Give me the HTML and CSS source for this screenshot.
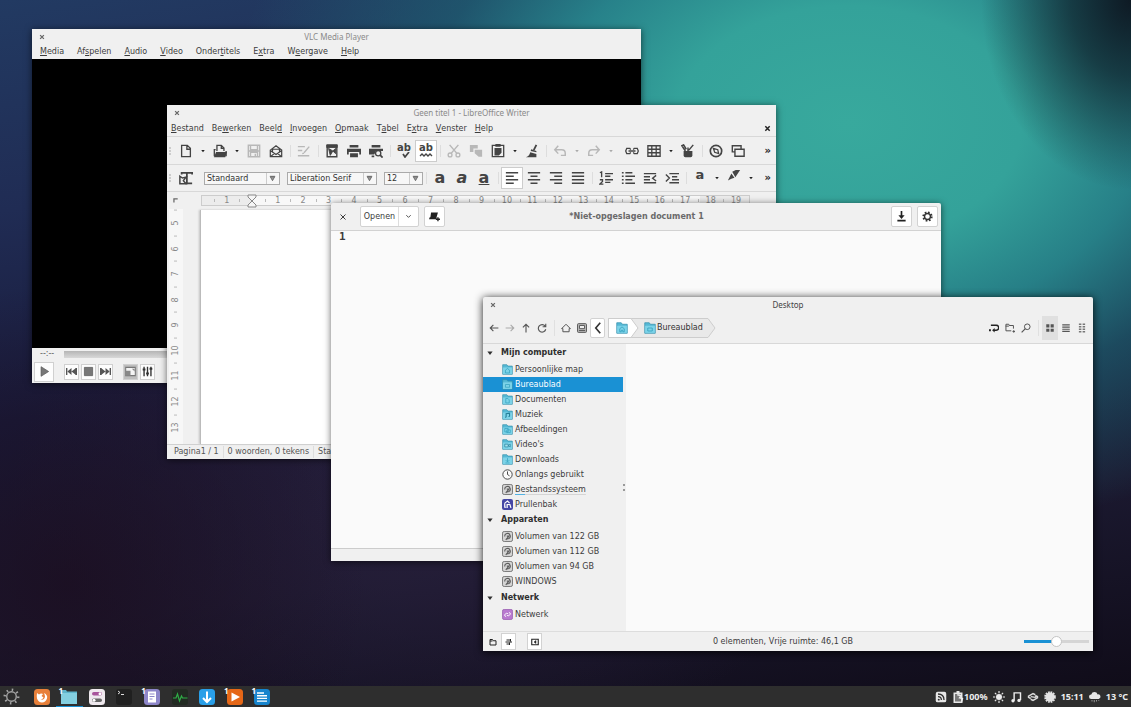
FILE: index.html
```html
<!DOCTYPE html>
<html lang="nl">
<head>
    <meta charset="UTF-8">
    <meta name="viewport" content="width=device-width, initial-scale=1.0">
    <title>Desktop</title>
    <link rel="stylesheet" href="styles.css">
</head>
<body>
    <!-- Shared icons -->
    <svg class="sprite" aria-hidden="true">
        <symbol id="i-close" viewBox="0 0 16 16"><path d="M3 3l10 10M13 3L3 13" stroke="currentColor" stroke-width="3.4"/></symbol>
        <symbol id="i-caret" viewBox="0 0 16 16"><path d="M1 4h14l-7 9z" fill="currentColor"/></symbol>
        <symbol id="i-drop" viewBox="0 0 16 16"><path d="M2 3h12M3 4h10l-5 9z" fill="#999" stroke="#666" stroke-width="2"/></symbol>
        <symbol id="i-folder" viewBox="0 0 16 16"><path d="M1 1h6l1.500 2H15v12H1z" fill="#55b9d5" stroke="#3592ad"/><path d="M1.500 5h13v9.500h-13z" fill="#7dd3e8"/></symbol>
        <symbol id="i-disk" viewBox="0 0 16 16"><rect x=".7" y=".7" width="14.600" height="14.600" rx="2.500" fill="#d4d4d4" stroke="#777" stroke-width="1.400"/><path d="M4 8a4 4 0 1 1 6 3l-3 .5M7 7.500h3L5.500 13" fill="none" stroke="#5c5c5c" stroke-width="1.600"/></symbol>
        <symbol id="i-left" viewBox="0 0 16 16"><path d="M15 8H2M7 3L2 8l5 5" fill="none" stroke="currentColor" stroke-width="1.800"/></symbol>
        <symbol id="i-right" viewBox="0 0 16 16"><path d="M1 8h13M9 3l5 5-5 5" fill="none" stroke="currentColor" stroke-width="1.800"/></symbol>
        <symbol id="i-undo" viewBox="0 0 16 16"><path d="M6 2L2 6.500 6 11M2 6.500h8q4 0 4 4V13H9" fill="none" stroke="currentColor" stroke-width="1.700"/></symbol>
        <symbol id="i-skip" viewBox="0 0 16 16"><path d="M1 3v10M15 3v10" stroke="currentColor" stroke-width="2"/><path d="M8 3v10L2 8zM14.500 3v10L8 8z" fill="currentColor"/></symbol>
    </svg>

    <main class="desktop">
        <!-- VLC -->
        <section class="window vlc">
            <header class="titlebar">
                <button class="close" aria-label="Sluiten"><svg><use href="#i-close"/></svg></button>
                <h2>VLC Media Player</h2>
            </header>
            <nav class="menubar">
                <button><u>M</u>edia</button>
                <button>Af<u>s</u>pelen</button>
                <button><u>A</u>udio</button>
                <button><u>V</u>ideo</button>
                <button>Onder<u>t</u>itels</button>
                <button>E<u>x</u>tra</button>
                <button>W<u>e</u>ergave</button>
                <button><u>H</u>elp</button>
            </nav>
            <div class="video"></div>
            <div class="seek"><span>--:--</span><div class="seek-track"></div></div>
            <div class="controls">
                <button class="play" aria-label="Afspelen"><svg viewBox="0 0 16 16"><path d="M3 1l11 7-11 7z" fill="#777" stroke="#555"/></svg></button>
                <div class="control-group">
                    <button aria-label="Vorige"><svg><use href="#i-skip"/></svg></button>
                    <button aria-label="Stoppen"><svg viewBox="0 0 16 16"><path d="M2 2h12v12H2z" fill="#777" stroke="#555"/></svg></button>
                    <button aria-label="Volgende"><svg class="flip"><use href="#i-skip"/></svg></button>
                </div>
                <div class="control-group">
                    <button class="pressed" aria-label="Volledig scherm"><svg viewBox="0 0 16 16"><path d="M1 2h14v12H1z" fill="#f4f4f4" stroke="#777" stroke-width="1.500"/><path d="M1 7h7v7H1zM10 4h4v4z" fill="#888"/></svg></button>
                    <button aria-label="Equalizer"><svg viewBox="0 0 16 16"><path d="M3 1v14M8 1v14M13 1v14" stroke="#333" stroke-width="2"/><path d="M1 5h4M6 11h4M11 4h4" stroke="#333" stroke-width="3"/></svg></button>
                </div>
            </div>
        </section>

        <!-- LibreOffice Writer -->
        <section class="window writer">
            <header class="titlebar">
                <button class="close" aria-label="Sluiten"><svg><use href="#i-close"/></svg></button>
                <h2>Geen titel 1 - LibreOffice Writer</h2>
            </header>
            <nav class="menubar">
                <button><u>B</u>estand</button>
                <button>Be<u>w</u>erken</button>
                <button>Beel<u>d</u></button>
                <button><u>I</u>nvoegen</button>
                <button><u>O</u>pmaak</button>
                <button>T<u>a</u>bel</button>
                <button>E<u>x</u>tra</button>
                <button><u>V</u>enster</button>
                <button><u>H</u>elp</button>
                <button class="close-doc" aria-label="Document sluiten"><svg><use href="#i-close"/></svg></button>
            </nav>
            <div class="toolbar standard">
                <span class="grip"></span>
                <button class="tool" aria-label="Nieuw"><svg viewBox="0 0 16 16"><path d="M3 1.500h6.500L13 5v9.500H3zM9 2v4h4" fill="none" stroke="currentColor" stroke-width="1.500"/></svg></button>
                <button class="caret" aria-label="Meer"><svg><use href="#i-caret"/></svg></button>
                <button class="tool" aria-label="Openen"><svg viewBox="0 0 16 16"><path d="M4.500 8V1.500h5l3 3V8M9.500 2v3h3M1.500 14V6.500H3M15 8v6" fill="none" stroke="currentColor" stroke-width="1.500"/><path d="M3.500 9H16l-2 6H1z" fill="currentColor"/></svg></button>
                <button class="caret" aria-label="Meer"><svg><use href="#i-caret"/></svg></button>
                <button class="tool off" aria-label="Opslaan"><svg viewBox="0 0 16 16"><path d="M1.500 1.500h13v13h-13zM4 2v4.500h8V2M4 14.500v-5h8v5M9.500 11v3M1 8h14" fill="none" stroke="currentColor" stroke-width="1.600"/></svg></button>
                <button class="tool" aria-label="E-mail"><svg viewBox="0 0 16 16"><path d="M1.500 7L8 2l6.500 5v7.500h-13zM4 9V6h8v3M1.500 7.500L8 12l6.500-4.500M1.500 14.500L6 11M14.500 14.500L10 11" fill="none" stroke="currentColor" stroke-width="1.400"/></svg></button>
                <span class="sep"></span>
                <button class="tool off" aria-label="Bewerken"><svg viewBox="0 0 16 16"><path d="M1 3h8M1 7.500h5M1 13.500h13M8 10l6-7M6 11l2-.5" fill="none" stroke="currentColor" stroke-width="1.600"/></svg></button>
                <span class="sep"></span>
                <button class="tool" aria-label="PDF"><svg viewBox="0 0 16 16"><path d="M2.500 1.500h11v13h-11z" fill="none" stroke="currentColor" stroke-width="1.600"/><path d="M2 1h12v3H2zM4 5l5 3 3-3v6L9 8l-3 5z" fill="currentColor" stroke="currentColor"/></svg></button>
                <button class="tool" aria-label="Afdrukken"><svg viewBox="0 0 16 16"><path d="M3 1h10v3H3zM0 5.500h16V12h-2V9H2v3H0zM3.500 10.500h9V15h-9z" fill="currentColor"/></svg></button>
                <button class="tool" aria-label="Afdrukvoorbeeld"><svg viewBox="0 0 16 16"><path d="M3 1h10v3H3zM0 5.500h16V8H8L6 12H0zM3 13h3v2H3z" fill="currentColor"/><circle cx="10.500" cy="10.500" r="3" fill="none" stroke="currentColor" stroke-width="1.500"/><path d="M12.500 12.500l3 3" stroke="currentColor" stroke-width="2"/></svg></button>
                <span class="sep"></span>
                <button class="tool spell" aria-label="Spelling">ab<svg viewBox="0 0 14 6"><path d="M6 2l2 3 4-5" fill="none" stroke="currentColor" stroke-width="1.700"/></svg></button>
                <button class="tool spell active" aria-label="Automatische spelling">ab<svg viewBox="0 0 14 6"><path d="M1 4l2-2 2 2 2-2 2 2 2-2 2 2" fill="none" stroke="currentColor" stroke-width="1.400"/></svg></button>
                <span class="sep"></span>
                <button class="tool off" aria-label="Knippen"><svg viewBox="0 0 16 16"><path d="M3 1l8.500 10M13 1L4.500 11" stroke="currentColor" stroke-width="1.700"/><circle cx="3.500" cy="12.500" r="2.200" fill="none" stroke="currentColor" stroke-width="1.500"/><circle cx="12.500" cy="12.500" r="2.200" fill="none" stroke="currentColor" stroke-width="1.500"/></svg></button>
                <button class="tool off" aria-label="Kopiëren"><svg viewBox="0 0 16 16"><path d="M1 1h9v4H5v4H1zM6.500 6.500H15v8h-4l-4.500-4z" fill="currentColor"/></svg></button>
                <button class="tool" aria-label="Plakken"><svg viewBox="0 0 16 16"><path d="M1.500 1.500h13v13h-13z" fill="none" stroke="currentColor" stroke-width="1.500"/><path d="M5 0h6v3H5zM4 4.500h8V10l-3 3H4z" fill="currentColor"/></svg></button>
                <button class="caret" aria-label="Meer"><svg><use href="#i-caret"/></svg></button>
                <button class="tool" aria-label="Opmaak kopiëren"><svg viewBox="0 0 16 16"><path d="M13 1l-3 6" stroke="currentColor" stroke-width="2"/><path d="M7 6l6 2v1.500L6.500 8zM6 9.500l7 2V15H1q4-1 5-5.500z" fill="currentColor"/></svg></button>
                <span class="sep"></span>
                <button class="tool off" aria-label="Ongedaan maken"><svg><use href="#i-undo"/></svg></button>
                <button class="caret off" aria-label="Meer"><svg><use href="#i-caret"/></svg></button>
                <button class="tool off" aria-label="Opnieuw"><svg class="flip"><use href="#i-undo"/></svg></button>
                <button class="caret off" aria-label="Meer"><svg><use href="#i-caret"/></svg></button>
                <span class="space"></span>
                <button class="tool" aria-label="Hyperlink"><svg viewBox="0 0 16 16"><path d="M6.500 6.500L5.500 5H2L.8 8 2 11h3.500l1-1.500M9.500 6.500l1-1.500H14l1.200 3-1.200 3h-3.500l-1-1.500M4 8h8" fill="none" stroke="currentColor" stroke-width="1.500"/></svg></button>
                <button class="tool" aria-label="Tabel"><svg viewBox="0 0 16 16"><path d="M1 2h14v12H1zM1 6h14M1 10h14M5.500 2v12M10.500 2v12" fill="none" stroke="currentColor" stroke-width="1.500"/></svg></button>
                <button class="caret" aria-label="Meer"><svg><use href="#i-caret"/></svg></button>
                <button class="tool" aria-label="Tekenfuncties"><svg viewBox="0 0 16 16"><path d="M3 8h10v5q0 2-2 2H5q-2 0-2-2z" fill="currentColor"/><path d="M5 8L1 2l2-1 3 5M9 7l5-6M8 8V4" fill="none" stroke="currentColor" stroke-width="1.700"/></svg></button>
                <span class="sep"></span>
                <button class="tool" aria-label="Navigator"><svg viewBox="0 0 16 16"><circle cx="8" cy="8" r="6.500" fill="none" stroke="currentColor" stroke-width="1.900"/><path d="M5 5l5 1.500L11 11 6.500 9.500z" fill="none" stroke="currentColor" stroke-width="1.500"/></svg></button>
                <button class="tool" aria-label="Galerij"><svg viewBox="0 0 16 16"><path d="M4.500 9h-3V2h10v4M4.500 6h10.500v8H4.500z" fill="none" stroke="currentColor" stroke-width="1.600"/></svg></button>
                <button class="more">»</button>
            </div>
            <div class="toolbar">
                <span class="grip"></span>
                <button class="tool" aria-label="Stijlen"><svg viewBox="0 0 16 16"><path d="M3 4V2h12v2M9 2v12M7 14h8" fill="none" stroke="currentColor" stroke-width="2"/><path d="M1 6l3 2 4-1-3 4 3 3.500H1z" fill="none" stroke="currentColor" stroke-width="1.700"/></svg></button>
                <span class="combo style-name">
                    <select aria-label="Alineastijl"><option>Standaard</option></select><svg><use href="#i-drop"/></svg>
                </span>
                <span class="combo font-name">
                    <select aria-label="Lettertype"><option>Liberation Serif</option></select><svg><use href="#i-drop"/></svg>
                </span>
                <span class="combo font-size">
                    <select aria-label="Tekengrootte"><option>12</option></select><svg><use href="#i-drop"/></svg>
                </span>
                <span class="sep"></span>
                <button class="tool letter">a</button>
                <button class="tool letter italic">a</button>
                <button class="tool letter under">a</button>
                <span class="sep"></span>
                <button class="tool active" aria-label="Links"><svg viewBox="0 0 16 16"><path d="M1 2h14M1 6h9M1 10h14M1 14h9" stroke="currentColor" stroke-width="1.600"/></svg></button>
                <button class="tool" aria-label="Centreren"><svg viewBox="0 0 16 16"><path d="M1 2h14M4 6h8M1 10h14M4 14h8" stroke="currentColor" stroke-width="1.600"/></svg></button>
                <button class="tool" aria-label="Rechts"><svg viewBox="0 0 16 16"><path d="M1 2h14M6 6h9M1 10h14M6 14h9" stroke="currentColor" stroke-width="1.600"/></svg></button>
                <button class="tool" aria-label="Uitvullen"><svg viewBox="0 0 16 16"><path d="M1 2h14M1 6h14M1 10h14M1 14h14" stroke="currentColor" stroke-width="1.600"/></svg></button>
                <span class="sep"></span>
                <button class="tool" aria-label="Nummering"><svg viewBox="0 0 16 16"><path d="M7 3h9M7 6h6M7 10h9M7 13h6M1 2l2-1v6M1 10h3v2L1 15h4" fill="none" stroke="currentColor" stroke-width="1.500"/></svg></button>
                <button class="tool" aria-label="Opsommingstekens"><svg viewBox="0 0 16 16"><path d="M5 2h8M5 6h11M5 10h8M5 14h11M1 2h2M1 6h2M1 10h2M1 14h2" stroke="currentColor" stroke-width="1.600"/></svg></button>
                <button class="tool" aria-label="Inspringing verkleinen"><svg viewBox="0 0 16 16"><path d="M1 3h14M1 6.500h7M1 10h7M1 13.500h14M15 5l-4 3.200 4 3.200" fill="none" stroke="currentColor" stroke-width="1.600"/></svg></button>
                <button class="tool" aria-label="Inspringing vergroten"><svg viewBox="0 0 16 16"><path d="M5 3h11M8 6.500h6M8 10h8M5 13.500h11M1 4l4 4-4 4" fill="none" stroke="currentColor" stroke-width="1.600"/></svg></button>
                <span class="sep"></span>
                <button class="tool letter color">a</button>
                <button class="caret" aria-label="Meer"><svg><use href="#i-caret"/></svg></button>
                <button class="tool high" aria-label="Markeren"><svg viewBox="0 0 16 16"><path d="M6 3l4-2h5L9.500 9.500zM5 5l3.500 5L5 11l-4 2 2-4z" fill="currentColor"/></svg></button>
                <button class="caret" aria-label="Meer"><svg><use href="#i-caret"/></svg></button>
                <button class="more">»</button>
            </div>
            <div class="ruler">
                <span class="tab-mark"><svg viewBox="0 0 16 16"><path d="M3 14V3h12" fill="none" stroke="#666" stroke-width="4"/></svg></span>
                <div class="scale">
                    <span>1</span><span class="indent"><svg viewBox="0 0 10 14"><path d="M1 1h8v2L5 7l4 4v2H1v-2l4-4-4-4z" fill="#f6f6f6" stroke="#888"/></svg></span><span>1</span><span>2</span><span>3</span><span>4</span><span>5</span><span>6</span><span>7</span><span>8</span><span>9</span><span>10</span><span>11</span><span>12</span><span>13</span><span>14</span><span>15</span><span>16</span><span>17</span><span>18</span><span>19</span>
                </div>
            </div>
            <div class="writer-body">
                <div class="vruler">
                    <span>5</span><span>6</span><span>7</span><span>8</span><span>9</span><span>10</span><span>11</span><span>12</span><span>13</span>
                </div>
                <div class="page"></div>
            </div>
            <footer class="writer-status">
                <span>Pagina1 / 1</span><span>0 woorden, 0 tekens</span><span>Standaard</span>
            </footer>
        </section>

        <!-- Text editor -->
        <section class="window gedit">
            <header class="headerbar">
                <div class="header-side">
                    <button class="close" aria-label="Sluiten"><svg viewBox="0 0 16 16"><path d="M3 3l10 10M13 3L3 13" stroke="currentColor" stroke-width="2"/></svg></button>
                    <div class="split">
                        <button class="open">Openen</button>
                        <button class="open-menu" aria-label="Recent"><svg viewBox="0 0 16 16"><path d="M3 5l5 5 5-5" fill="none" stroke="currentColor" stroke-width="2"/></svg></button>
                    </div>
                    <button class="boxed" aria-label="Nieuw document"><svg viewBox="0 0 16 16"><path d="M3 2h10l-2 7v3H0l1-3h1zM12 9h2v2h2v2h-2v2h-2v-2h-2v-2h2z" fill="#222"/></svg></button>
                </div>
                <h2>*Niet-opgeslagen document 1</h2>
                <div class="header-side end">
                    <button class="boxed" aria-label="Opslaan"><svg viewBox="0 0 16 16"><path d="M8 0v8M2 14h12" stroke="#222" stroke-width="2.400"/><path d="M3.500 6h9L8 11.500z" fill="#222"/></svg></button>
                    <button class="boxed" aria-label="Instellingen"><svg viewBox="0 0 16 16"><circle cx="8" cy="8" r="6" fill="none" stroke="#333" stroke-width="3" stroke-dasharray="2.400 2.310"/><circle cx="8" cy="8" r="4.300" fill="none" stroke="#333" stroke-width="2"/></svg></button>
                </div>
            </header>
            <div class="editor">1</div>
            <footer class="gedit-status"></footer>
        </section>

        <!-- File manager -->
        <section class="window files">
            <header class="titlebar">
                <button class="close" aria-label="Sluiten"><svg><use href="#i-close"/></svg></button>
                <h2>Desktop</h2>
            </header>
            <div class="files-toolbar">
                <button class="nav" aria-label="Terug"><svg><use href="#i-left"/></svg></button>
                <button class="nav off" aria-label="Vooruit"><svg><use href="#i-right"/></svg></button>
                <button class="nav" aria-label="Omhoog"><svg class="turn"><use href="#i-right"/></svg></button>
                <button class="nav" aria-label="Vernieuwen"><svg viewBox="0 0 16 16"><path d="M13 5a6 6 0 1 0 1 5M14 1v5H9" fill="none" stroke="currentColor" stroke-width="1.800"/></svg></button>
                <span class="sep"></span>
                <button class="nav" aria-label="Persoonlijke map"><svg viewBox="0 0 16 16"><path d="M1 9l7-7 7 7h-2v5H3V9z" fill="none" stroke="currentColor" stroke-width="1.600"/></svg></button>
                <button class="nav" aria-label="Computer"><svg viewBox="0 0 16 16"><rect x=".8" y="1" width="14.400" height="14" rx="1.500" fill="#b5b5b5" stroke="#555" stroke-width="1.500"/><path d="M4 4h8v5H4zM3 12h10" fill="#eee" stroke="#555" stroke-width="1.500"/></svg></button>
                <button class="crumb-back" aria-label="Schuiven"><svg viewBox="0 0 16 16"><path d="M11 1L5 8l6 7" fill="none" stroke="#333" stroke-width="2.200"/></svg></button>
                <div class="crumbs">
                    <svg class="crumbs-shape" viewBox="0 0 108 20"><path d="M.5.5H100l7 9.500-7 9.500H.5z" fill="#e9e9e9" stroke="#cdcdcd"/><path d="M.5.5H23L30 10l-7 9.500H.5z" fill="#fff" stroke="#cdcdcd"/></svg>
                    <button aria-label="Thuis"><svg viewBox="0 0 16 16"><use href="#i-folder"/><path d="M5 13V9l3-2.500L11 9v4H9v-2H7v2z" fill="none" stroke="#2f9dbb"/></svg></button>
                    <button><svg viewBox="0 0 16 16"><use href="#i-folder"/><path d="M5 8h6v4H5z" fill="none" stroke="#2f9dbb"/></svg>Bureaublad</button>
                </div>
                <div class="view-buttons">
                    <button class="nav" aria-label="Locatie"><svg viewBox="0 0 16 16"><path d="M3 3.500h8.500a3.500 3.500 0 0 1 0 8H8" fill="none" stroke="#222" stroke-width="2.200"/><path d="M9 8v7l-4-3.500zM0 10h3v3H0z" fill="#222"/></svg></button>
                    <button class="nav" aria-label="Nieuwe map"><svg viewBox="0 0 16 16"><path d="M10 12.500H1.500V2H6l1 2h6.500v5M1 5h5l1-1" fill="none" stroke="currentColor" stroke-width="1.600"/><path d="M12 13.500h4M14 11.500v4" stroke="currentColor" stroke-width="1.600"/></svg></button>
                    <button class="nav" aria-label="Zoeken"><svg viewBox="0 0 16 16"><circle cx="10" cy="6" r="4.500" fill="none" stroke="currentColor" stroke-width="1.600"/><path d="M7 9l-6 6" stroke="currentColor" stroke-width="2"/></svg></button>
                    <span class="sep"></span>
                    <button class="nav chosen" aria-label="Pictogrammen"><svg viewBox="0 0 16 16"><path d="M2 2h5v5H2zM9 2h5v5H9zM2 9h5v5H2zM9 9h5v5H9z" fill="currentColor"/></svg></button>
                    <button class="nav" aria-label="Lijst"><svg viewBox="0 0 16 16"><path d="M2 3h12M2 6.500h12M2 10h12M2 13.500h12" stroke="currentColor" stroke-width="1.900"/></svg></button>
                    <button class="nav" aria-label="Compact"><svg viewBox="0 0 16 16"><path d="M3 2h4M9 2h4M3 6h4M9 6h4M3 10h4M9 10h4M3 14h4M9 14h4" stroke="#777" stroke-width="2.200"/></svg></button>
                </div>
            </div>
            <div class="files-body">
                <nav class="places">
                    <h3><svg><use href="#i-caret"/></svg>Mijn computer</h3>
                    <ul>
                        <li><a href="#"><svg viewBox="0 0 16 16"><use href="#i-folder"/><path d="M5 13V9l3-2.500L11 9v4z" fill="none" stroke="#2f9dbb"/></svg>Persoonlijke map</a></li>
                        <li class="selected"><a href="#"><svg viewBox="0 0 16 16"><use href="#i-folder"/><path d="M5 8h6v4H5z" fill="none" stroke="#2f9dbb"/></svg>Bureaublad</a></li>
                        <li><a href="#"><svg viewBox="0 0 16 16"><use href="#i-folder"/><path d="M5.500 6.500h3l2 2V13h-5z" fill="none" stroke="#2f9dbb"/></svg>Documenten</a></li>
                        <li><a href="#"><svg viewBox="0 0 16 16"><use href="#i-folder"/><path d="M6 12V7l5-1v5M4.500 12H6M9.500 11H11" fill="none" stroke="#247f99" stroke-width="1.600"/></svg>Muziek</a></li>
                        <li><a href="#"><svg viewBox="0 0 16 16"><use href="#i-folder"/><path d="M4 6.500h5v5H4zM7 8.500h5v4H7z" fill="none" stroke="#2f9dbb"/></svg>Afbeeldingen</a></li>
                        <li><a href="#"><svg viewBox="0 0 16 16"><use href="#i-folder"/><path d="M4 7.500h5v4H4zM9 9.500l3-2v4z" fill="#a8e3f0" stroke="#247f99"/></svg>Video's</a></li>
                        <li><a href="#"><svg viewBox="0 0 16 16"><use href="#i-folder"/><path d="M8 6v5M5.500 9L8 11.500 10.500 9M5 13h6" fill="none" stroke="#2f9dbb"/></svg>Downloads</a></li>
                        <li><a href="#"><svg viewBox="0 0 16 16"><circle cx="8" cy="8" r="6.800" fill="#fafafa" stroke="#444" stroke-width="1.400"/><path d="M8 3.500V8l3 2" fill="none" stroke="#444" stroke-width="1.400"/></svg>Onlangs gebruikt</a></li>
                        <li><a href="#"><svg><use href="#i-disk"/></svg><span class="usage">Bestandssysteem</span></a></li>
                        <li><a href="#"><svg viewBox="0 0 16 16"><rect width="16" height="16" rx="3" fill="#4547a5"/><path d="M4 6L8 3l3 3M4 6v6h2M7.500 13V8h4l1.500 5" fill="none" stroke="#fff" stroke-width="1.800"/></svg>Prullenbak</a></li>
                    </ul>
                    <h3><svg><use href="#i-caret"/></svg>Apparaten</h3>
                    <ul>
                        <li><a href="#"><svg><use href="#i-disk"/></svg>Volumen van 122 GB</a></li>
                        <li><a href="#"><svg><use href="#i-disk"/></svg>Volumen van 112 GB</a></li>
                        <li><a href="#"><svg><use href="#i-disk"/></svg>Volumen van 94 GB</a></li>
                        <li><a href="#"><svg><use href="#i-disk"/></svg>WINDOWS</a></li>
                    </ul>
                    <h3><svg><use href="#i-caret"/></svg>Netwerk</h3>
                    <ul>
                        <li><a href="#"><svg viewBox="0 0 16 16"><rect x=".5" y=".5" width="15" height="15" rx="3" fill="#b878cf" stroke="#9056a8"/><path d="M6 11l-2-1v-2l3-2 2 1M7 9l2 1 3-2V6l-2-1" fill="none" stroke="#fff" stroke-width="1.300"/></svg>Netwerk</a></li>
                    </ul>
                </nav>
                <span class="pane-handle"></span>
                <div class="file-area"></div>
            </div>
            <footer class="files-status">
                <button class="flat" aria-label="Locaties"><svg viewBox="0 0 16 16"><path d="M2 3h5l1.500 2.500H14V14H2zM2 6h5" fill="none" stroke="#222" stroke-width="2"/></svg></button>
                <button class="tree" aria-label="Boomstructuur"><svg viewBox="0 0 16 16"><path d="M3 4h9M1 8h13M3 12h7M11 2v5M9 9v5" stroke="#222" stroke-width="2"/></svg></button>
                <button class="hide" aria-label="Zijbalk verbergen"><svg viewBox="0 0 16 16"><path d="M1.500 2.500h13v11h-13z" fill="none" stroke="#222" stroke-width="2.200"/><path d="M10 5v6L6 8z" fill="#222" stroke="#222"/></svg></button>
                <p>0 elementen, Vrije ruimte: 46,1 GB</p>
                <input type="range" class="zoom" min="0" max="100" value="50" aria-label="Zoomniveau">
            </footer>
        </section>
    </main>

    <!-- Panel -->
    <footer class="panel">
        <button class="start" aria-label="Menu"><svg viewBox="0 0 16 16"><circle cx="8" cy="8" r="4.500" fill="none" stroke="#a5a5a5" stroke-width="1.300"/><circle cx="8" cy="8" r="6.300" fill="none" stroke="#a5a5a5" stroke-width="2.400" stroke-dasharray="1.400 3.550"/></svg></button>
        <div class="launchers">
            <button aria-label="Firefox"><svg viewBox="0 0 16 16"><rect width="16" height="16" rx="3.500" fill="#e8803a"/><path d="M3 4l2 1.500Q7 4 9 5L7.500 7l2 1.500Q8.500 11 6 10q4 2 5-2 0-2-1-4 4 2 3 5.500-1.500 4-5 4T3 9.500Q2.500 7 3 4z" fill="#fff"/></svg></button>
            <button class="running"><i>1</i><svg viewBox="0 0 16 16"><path d="M0 2h5l1 1.500h10V16H0z" fill="#5eb5cc"/><path d="M0 5h16v11H0z" fill="#83cfe0"/></svg></button>
            <button aria-label="Instellingen"><svg viewBox="0 0 16 16"><rect width="16" height="16" rx="3.500" fill="#efe9ee"/><rect x="3" y="3" width="10" height="3.600" rx="1.800" fill="#a8559c"/><rect x="3" y="9.500" width="10" height="3.600" rx="1.800" fill="#666"/><circle cx="11" cy="4.800" r="1.500" fill="#fff"/><circle cx="5" cy="11.300" r="1.500" fill="#fff"/></svg></button>
            <button aria-label="Terminal"><svg viewBox="0 0 16 16"><rect width="16" height="16" rx="3" fill="#202020"/><path d="M2 2l2 1.500L2 5M5 5.500h3" fill="none" stroke="#ddd"/></svg></button>
            <button><i>1</i><svg viewBox="0 0 16 16"><rect width="16" height="16" rx="3.500" fill="#8d86c9"/><path d="M4 2.500h8v11H4z" fill="#fff"/><path d="M5.500 5h5M5.500 7.500h5M5.500 10h3" stroke="#8d86c9"/></svg></button>
            <button aria-label="Systeemmonitor"><svg viewBox="0 0 16 16"><rect width="16" height="16" rx="3" fill="#222a22"/><path d="M1 9h3l1.500-4 2 7 2-5 1 2h5" fill="none" stroke="#2fae46" stroke-width="1.200"/></svg></button>
            <button aria-label="Downloads"><svg viewBox="0 0 16 16"><rect width="16" height="16" rx="3.500" fill="#299fe8"/><path d="M8 2.500V13M4 9l4 4 4-4" fill="none" stroke="#fff" stroke-width="2"/></svg></button>
            <button><i>1</i><svg viewBox="0 0 16 16"><rect width="16" height="16" rx="3.500" fill="#e56717"/><path d="M4.500 3.500L13 8l-8.500 4.500z" fill="#fff"/></svg></button>
            <button><i>1</i><svg viewBox="0 0 16 16"><rect width="16" height="16" rx="3.500" fill="#1684cd"/><path d="M3 4h7M3 6.700h10M3 9.400h10M3 12.100h10" stroke="#fff" stroke-width="1.400"/></svg></button>
        </div>
        <div class="tray">
            <svg viewBox="0 0 16 16"><rect x="1" y="1" width="14" height="14" rx="2.500" fill="#e6e6e6"/><path d="M4 4q8 0 8 8M4 7.500q4.500 0 4.500 4.500" fill="none" stroke="#2d2d2d" stroke-width="1.700"/><circle cx="5" cy="11.500" r="1.300" fill="#2d2d2d"/></svg>
            <span class="battery"><svg viewBox="0 0 16 16"><path d="M3 3h10v12H3z" fill="#777" stroke="#e6e6e6" stroke-width="2"/><path d="M6 0h4v3H6z" fill="#e6e6e6"/><path d="M7 5l5 1-2 3 4 1-1 4" fill="none" stroke="#eee" stroke-width="1.800"/></svg>100%</span>
            <svg viewBox="0 0 16 16"><circle cx="8" cy="8" r="4" fill="#eee"/><path d="M8 0v3M8 13v3M0 8h3M13 8h3M2.500 2.500l2 2M11.500 11.500l2 2M2.500 13.500l2-2M11.500 4.500l2-2" stroke="#eee" stroke-width="1.500"/></svg>
            <svg viewBox="0 0 16 16"><path d="M5.500 13V2.500h8.500V12" fill="none" stroke="#eee" stroke-width="1.900"/><circle cx="4" cy="13" r="2.200" fill="#eee"/><circle cx="12" cy="12.500" r="2.200" fill="#eee"/></svg>
            <svg viewBox="0 0 16 16"><path d="M5 10l-3-1.500V7l6-3.500L11 5M5 7.500l6 1 3-2M11 6l3 1.500V9l-6 3.500L5 11" fill="none" stroke="#ddd" stroke-width="1.900"/></svg>
            <svg viewBox="0 0 16 16"><circle cx="8" cy="8" r="6" fill="#e4e4e4"/><circle cx="8" cy="8" r="6.500" fill="none" stroke="#e4e4e4" stroke-width="2.500" stroke-dasharray="2.300 1.100"/></svg>
            <time>15:11</time>
            <span class="weather"><svg viewBox="0 0 16 16"><path d="M3 10.500a3 3 0 0 1 0-6 4.500 4.500 0 0 1 8.500 0 3 3 0 0 1 1.500 6z" fill="#e8e8e8"/><path d="M4 12v2M7 12v3M10 12v2M13 12v1" stroke="#bbb"/></svg>13 °C</span>
        </div>
    </footer>
</body>
</html>
```
FILE: styles.css
```css
* {
    box-sizing: border-box;
}
body {
    margin: 0;
    height: 100vh;
    display: flex;
    flex-direction: column;
    overflow: hidden;
    font: 8px/12px "DejaVu Sans", sans-serif;
    color: #3c3c3c;
}
h2, h3, p, ul {
    margin: 0;
    padding: 0;
    font-size: inherit;
}
ul {
    list-style: none;
}
a {
    color: inherit;
    text-decoration: none;
}
button {
    display: flex;
    align-items: center;
    justify-content: center;
    padding: 0;
    border: 0;
    background: none;
    font: inherit;
    color: inherit;
}
svg {
    flex: none;
    width: 12px;
    height: 12px;
}
.sprite {
    position: absolute;
    width: 0;
    height: 0;
}
.flip {
    transform: scaleX(-1);
}
.turn {
    transform: rotate(-90deg);
}
.desktop {
    flex: 1;
    position: relative;
    background:
        radial-gradient(ellipse 150px 190px at 100% 0, #0e1a24 0%, rgba(14, 28, 38, 0.7) 40%, rgba(14, 30, 40, 0) 100%),
        radial-gradient(ellipse 620px 420px at 75% 18%, #38a99d 0%, #34a29a 28%, rgba(40, 138, 143, 0.9) 48%, rgba(30, 100, 116, 0.65) 68%, rgba(30, 62, 90, 0) 100%),
        radial-gradient(ellipse 300px 300px at 6% 85%, rgba(28, 14, 32, 0.8) 0%, rgba(28, 14, 34, 0) 100%),
        radial-gradient(ellipse 420px 260px at 38% 72%, rgba(42, 32, 60, 0.8) 0%, rgba(36, 27, 54, 0) 100%),
        linear-gradient(172deg, #223a62 0%, #202c54 25%, #191a3a 50%, #1b1930 75%, #100c19 100%);
}

/* Windows */
.window {
    position: absolute;
    display: flex;
    flex-direction: column;
    width: 609px;
    height: 354px;
    background: #f0f0f0;
    box-shadow: 0 1px 7px rgba(0, 0, 0, 0.6);
}
.vlc {
    left: 32px;
    top: 29px;
}
.writer {
    left: 167px;
    top: 105px;
}
.gedit {
    left: 331px;
    top: 203px;
    height: 358px;
}
.files {
    left: 483px;
    top: 297px;
}
.titlebar {
    flex: none;
    display: grid;
    grid-template-columns: 20px 1fr 20px;
    align-items: center;
    height: 16px;
    color: #8a8a8a;
}
.titlebar h2 {
    font: 8px/12px "Noto Sans", sans-serif;
    text-align: center;
}
.titlebar .close svg {
    width: 6px;
    height: 6px;
    color: #666;
}
.menubar {
    flex: none;
    display: flex;
    height: 14px;
}
.vlc .menubar {
    gap: 13px;
    padding: 0 8px;
}
.writer .menubar {
    gap: 8px;
    height: 16px;
    padding: 0 5px 0 4px;
    border-bottom: 1px solid #d8d8d8;
}
.close-doc {
    margin-left: auto;
    color: #222;
}
.close-doc svg {
    width: 7px;
    height: 7px;
}

/* VLC */
.video {
    flex: 1;
    background: #000;
}
.seek {
    display: flex;
    gap: 10px;
    height: 12px;
    padding-left: 8px;
    color: #555;
}
.seek-track {
    flex: 1;
    height: 7px;
    margin-top: 3px;
    background: linear-gradient(#b5b5b5, #d8d8d8);
}
.controls {
    display: flex;
    align-items: center;
    gap: 10px;
    height: 23px;
    padding: 0 2px;
}
.control-group {
    display: flex;
    gap: 2px;
}
.controls button {
    width: 16px;
    height: 16px;
    border: 1px solid #d0d0d0;
    background: #fdfdfd;
    color: #555;
}
.controls .control-group button {
    width: 15px;
}
.controls .play {
    width: 20px;
    height: 20px;
}
.controls svg {
    width: 11px;
    height: 11px;
}
.controls .pressed {
    background: #bdbdbd;
}

/* Writer */
.toolbar {
    flex: none;
    display: flex;
    align-items: center;
    height: 27px;
    padding: 0 3px 0 2px;
    border-bottom: 1px solid #d8d8d8;
    color: #444;
}
.toolbar.standard {
    height: 28px;
}
.grip {
    width: 6px;
    height: 8px;
    border-left: 2px dotted #ccc;
}
.tool {
    flex: none;
    width: 22px;
    height: 22px;
}
.tool svg {
    width: 14px;
    height: 14px;
}
.tool.active {
    border: 1px solid #ccc;
    background: #fff;
}
.off {
    color: #b8b8b8;
}
.caret {
    width: 12px;
    height: 22px;
    color: #222;
}
.caret svg {
    width: 4px;
    height: 4px;
}
.caret.off {
    color: #aaa;
}
.toolbar .sep {
    width: 6px;
    height: 12px;
    background: linear-gradient(#ddd, #ddd) center / 1px 100% no-repeat;
}
.space {
    width: 4px;
}
.spell {
    flex-direction: column;
    font: bold 10px/9px "DejaVu Sans", sans-serif;
}
.spell svg {
    height: 6px;
}
.letter {
    font: bold 16px/18px "DejaVu Sans", sans-serif;
}
.letter.italic {
    font-style: italic;
}
.letter.under {
    text-decoration: underline;
}
.letter.color {
    padding-bottom: 6px;
    font-size: 13px;
}
.high {
    padding-bottom: 4px;
}
.more {
    margin-left: auto;
    padding: 0 2px;
    font-weight: bold;
    font-size: 10px;
    color: #222;
}
.combo {
    display: flex;
    align-items: center;
    height: 13px;
    margin-left: 7px;
    padding-right: 2px;
    border: 1px solid #aaa;
    background: #f7f7f7;
}
.combo select {
    flex: 1;
    min-width: 0;
    height: 11px;
    padding: 0 2px;
    appearance: none;
    border: 0;
    border-right: 1px solid #ccc;
    border-radius: 0;
    background: none;
    font: 8px/11px "DejaVu Sans", sans-serif;
    color: #333;
}
.combo svg {
    width: 7px;
    height: 7px;
    margin: 0 1px 0 2px;
}
.style-name {
    width: 76px;
}
.font-name {
    width: 90px;
}
.font-size {
    width: 39px;
}
.ruler {
    flex: none;
    display: flex;
    align-items: center;
    height: 17px;
    color: #888;
}
.tab-mark {
    width: 34px;
    padding-left: 6px;
}
.tab-mark svg {
    width: 5px;
    height: 5px;
}
.scale {
    display: flex;
    width: 549px;
    height: 11px;
    padding: 0 0 0 12px;
    border: 1px solid #ccc;
    background: linear-gradient(90deg, #ececec 51px, #f8f8f8 51px, #f8f8f8 498px, #ececec 498px);
}
.scale span {
    flex: 1;
    line-height: 10px;
    text-align: center;
    background: linear-gradient(#bbb, #bbb) left center / 1px 3px no-repeat;
}
.indent svg {
    width: 10px;
    height: 14px;
    margin: -2px 0;
}
.writer-body {
    flex: 1;
    display: flex;
    min-height: 0;
}
.vruler {
    display: flex;
    flex-direction: column;
    width: 14px;
    margin-left: 2px;
    padding: 1px 0 4px;
    background: #f7f7f7;
    color: #888;
}
.vruler span {
    flex: 1;
    line-height: 14px;
    text-align: center;
    writing-mode: vertical-rl;
    transform: rotate(180deg);
    background: linear-gradient(#bbb, #bbb) center bottom / 3px 1px no-repeat;
}
.page {
    flex: 1;
    margin: 1px 27px 0 17px;
    border-left: 1px solid #bbb;
    background: #fff;
    box-shadow: -1px 0 2px rgba(0, 0, 0, 0.2);
}
.writer-status {
    display: flex;
    align-items: center;
    height: 15px;
    border-top: 1px solid #d0d0d0;
    color: #555;
}
.writer-status span {
    padding: 0 4px;
    border-right: 1px solid #ddd;
}
.writer-status span:first-child {
    padding-left: 7px;
}

/* Text editor */
.gedit, .files {
    width: 610px;
    border-radius: 2px 2px 0 0;
}
.headerbar {
    display: grid;
    grid-template-columns: 1fr auto 1fr;
    align-items: center;
    height: 28px;
    padding: 0 3px 0 4px;
    border-bottom: 1px solid #d2d2d2;
}
.headerbar h2 {
    color: #6a6a6a;
}
.header-side {
    display: flex;
    gap: 5px;
}
.end {
    justify-content: flex-end;
}
.headerbar .close {
    width: 15px;
    margin-right: 5px;
}
.headerbar .close svg {
    width: 8px;
    height: 8px;
}
.split {
    display: flex;
    border: 1px solid #d2d2d2;
    border-radius: 2px;
    background: #fff;
}
.open {
    width: 38px;
    height: 19px;
    border-right: 1px solid #ddd;
}
.open-menu {
    width: 19px;
}
.open-menu svg {
    width: 7px;
    height: 7px;
}
.boxed {
    width: 21px;
    height: 21px;
    border: 1px solid #d2d2d2;
    border-radius: 2px;
    background: #fff;
}
.boxed svg {
    width: 11px;
    height: 11px;
}
.editor {
    flex: 1;
    padding: 0 8px;
    background: #fafafa;
    font: bold 11px/12px "DejaVu Sans Mono", monospace;
}
.gedit-status {
    height: 13px;
    border-top: 1px solid #ccc;
}

/* File manager */
.files {
    box-shadow: 0 1px 9px rgba(0, 0, 0, 0.9);
}
.files .titlebar {
    color: #444;
}
.files-toolbar {
    flex: none;
    display: flex;
    align-items: center;
    height: 31px;
    padding: 0 3px;
    border-bottom: 1px solid #d8d8d8;
    color: #555;
}
.nav {
    width: 16px;
    height: 24px;
}
.nav svg {
    width: 10px;
    height: 10px;
}
.nav.off {
    color: #aaa;
}
.files-toolbar .sep {
    width: 8px;
    height: 16px;
    background: linear-gradient(#e0e0e0, #e0e0e0) center / 1px 100% no-repeat;
}
.crumb-back {
    width: 15px;
    height: 20px;
    margin-right: 3px;
    border: 1px solid #d2d2d2;
    border-radius: 2px;
    background: #fff;
}
.crumbs {
    position: relative;
    display: flex;
    align-items: center;
    gap: 16px;
    width: 108px;
    height: 20px;
    padding-left: 8px;
    color: #333;
}
.crumbs-shape {
    position: absolute;
    left: 0;
    top: 0;
    width: 108px;
    height: 20px;
}
.crumbs button {
    position: relative;
    gap: 1px;
}
.view-buttons {
    display: flex;
    align-items: center;
    margin-left: auto;
}
.chosen {
    background: #e0e0e0;
}
.files-body {
    flex: 1;
    display: flex;
    min-height: 0;
}
.places {
    width: 140px;
    padding-top: 1px;
}
.places h3 {
    display: flex;
    align-items: center;
    height: 15px;
    margin: 0 0 2px;
    color: #2e2e2e;
}
.places h3 svg {
    width: 6px;
    height: 6px;
    margin: 0 8px 0 4px;
}
.places ul + h3 {
    margin-top: 1px;
}
.places ul:first-of-type + h3 {
    margin-top: 0;
}
.places a {
    display: flex;
    align-items: center;
    gap: 2px;
    height: 15px;
    padding-left: 19px;
}
.places a svg {
    width: 11px;
    height: 11px;
}
.selected {
    background: #1a91d4;
    color: #fff;
}
.usage {
    line-height: 11px;
    background: linear-gradient(90deg, #53b2e2 10px, #d5d5d5 10px) bottom / 100% 1px no-repeat;
}
.pane-handle {
    align-self: center;
    width: 3px;
    height: 7px;
    border-left: 2px dotted #999;
}
.file-area {
    flex: 1;
    background: #fafafa;
}
.files-status {
    display: flex;
    align-items: center;
    height: 20px;
    padding: 0 4px 0 3px;
    border-top: 1px solid #ddd;
}
.files-status button {
    width: 15px;
    height: 17px;
}
.files-status svg {
    width: 8px;
    height: 8px;
}
.files-status .flat {
    width: 13px;
}
.tree, .hide {
    border: 1px solid #d2d2d2;
    background: #fff;
}
.tree {
    margin: 0 11px 0 2px;
}
.files-status p {
    flex: 1;
    text-align: center;
}
.zoom {
    width: 65px;
    height: 12px;
    margin: 0;
    appearance: none;
    background: linear-gradient(90deg, #1a91d4 50%, #d5d5d5 50%) center / 100% 3px no-repeat;
}
.zoom::-webkit-slider-thumb {
    appearance: none;
    width: 11px;
    height: 11px;
    border: 1px solid #c4c4c4;
    border-radius: 50%;
    background: #fff;
}

/* Panel */
.panel {
    flex: none;
    display: flex;
    align-items: center;
    height: 21px;
    padding: 0 3px;
    background: #2e2e2e;
    font: bold 9px/14px "Noto Sans", sans-serif;
    color: #ececec;
}
.panel .start svg {
    width: 17px;
    height: 17px;
}
.launchers {
    display: flex;
    width: 248px;
    height: 21px;
    margin-left: 8px;
}
.launchers button {
    position: relative;
    flex: 1;
}
.launchers svg {
    width: 16px;
    height: 16px;
}
.launchers .running {
    border-bottom: 1px solid #1a91d4;
}
.launchers i {
    position: absolute;
    left: 3px;
    top: 0;
    font: bold 8px/10px "Noto Sans", sans-serif;
    color: #fff;
}
.tray {
    display: flex;
    align-items: center;
    gap: 5px;
    margin-left: auto;
}
.battery, .weather {
    display: flex;
    align-items: center;
}
.weather {
    gap: 5px;
}
```
